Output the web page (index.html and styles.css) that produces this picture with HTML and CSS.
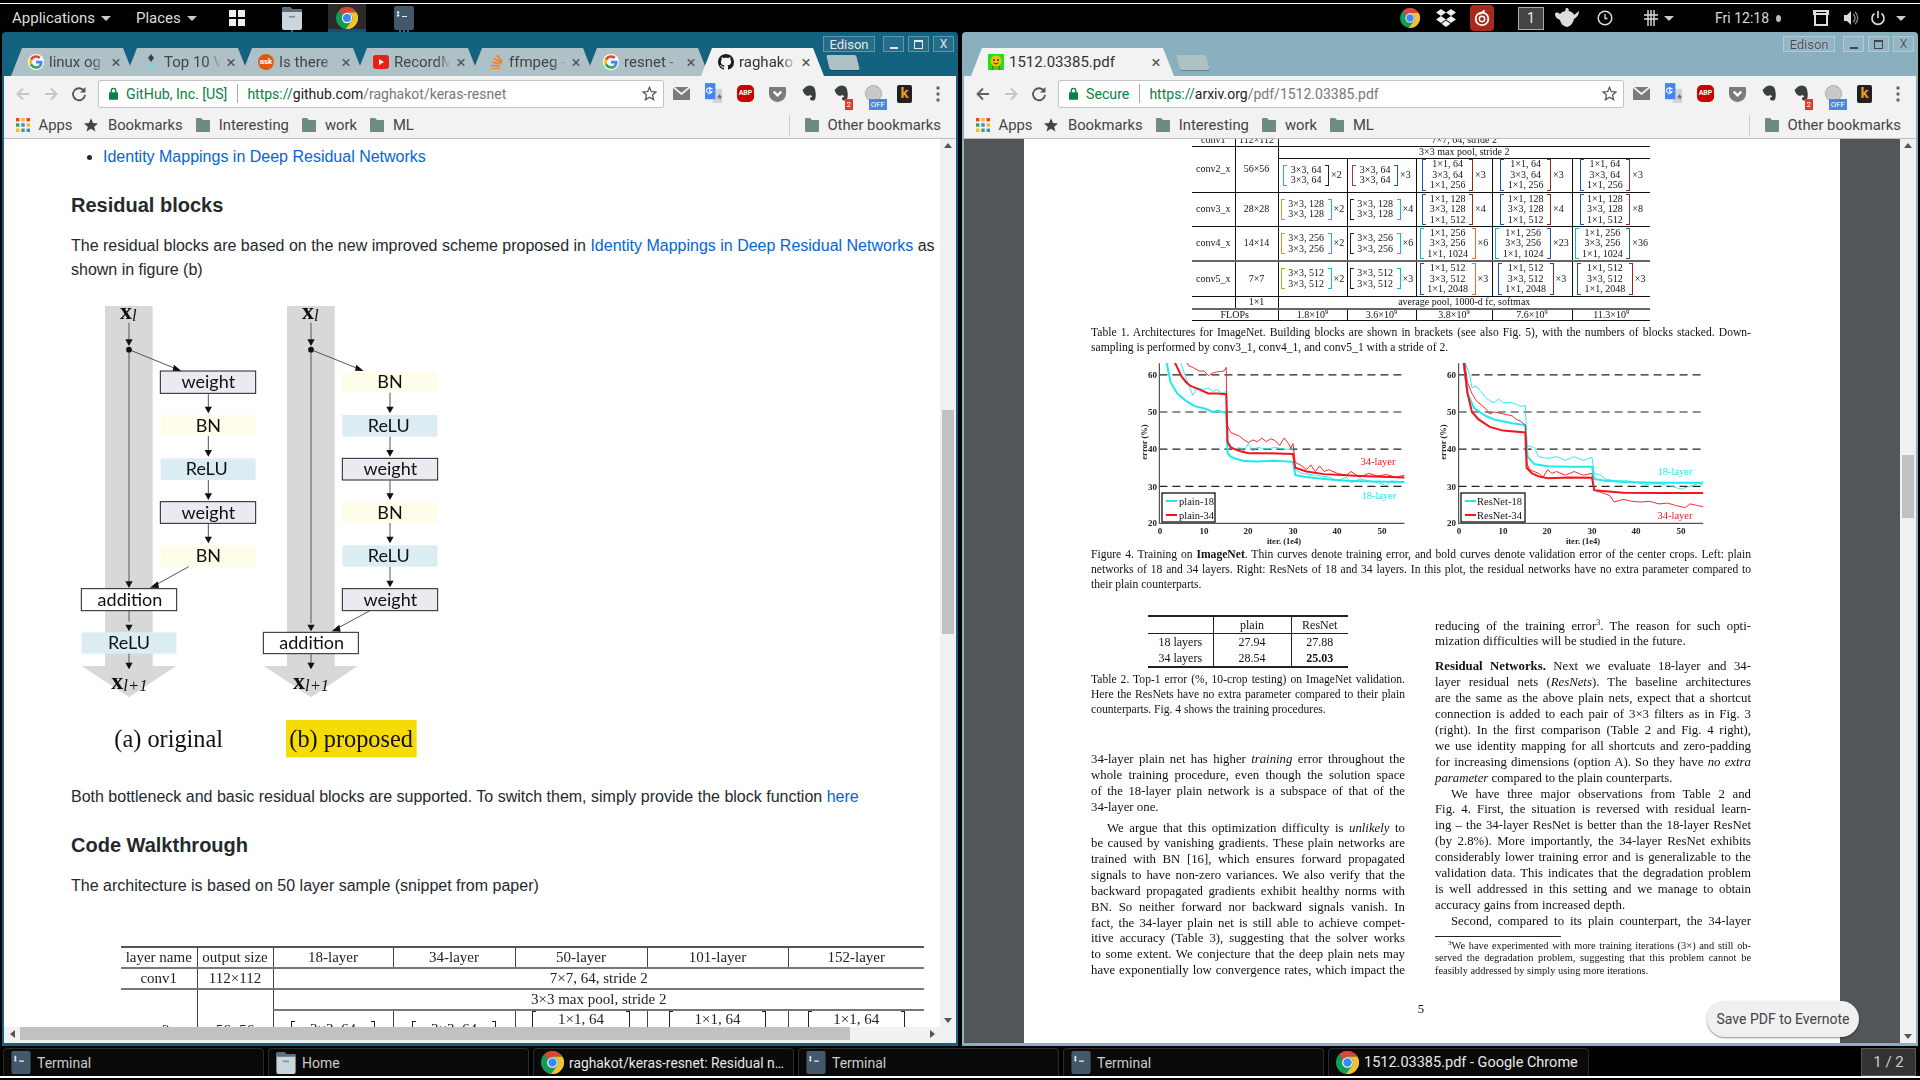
FILE: index.html
```html
<!DOCTYPE html>
<html lang="en">

<head>
    <meta charset="UTF-8">
    <title>Desktop - keras-resnet and arXiv 1512.03385</title>
    <link rel="stylesheet" href="styles.css">
</head>

<body>
    <svg class="defs" width="0" height="0">
        <defs>
            <symbol id="i-chrome" viewBox="0 0 24 24">
                <circle cx="12" cy="12" r="12" fill="#0f9d58" />
                <path fill="#db4437" d="M3.5 3.5A12 12 0 0 1 22.4 6H12a6 6 0 0 0-5.2 3z" />
                <path fill="#fbc02d" d="M22.4 6A12 12 0 0 1 10.5 23.9L17.2 15A6 6 0 0 0 12 6z" />
                <circle cx="12" cy="12" r="5.6" fill="#fff" />
                <circle cx="12" cy="12" r="4.4" fill="#4285f4" />
            </symbol>
            <symbol id="i-g" viewBox="-4 -4 56 56">
                <circle cx="24" cy="24" r="28" fill="#fff" />
                <path fill="#EA4335" d="M24 9.5c3.54 0 6.71 1.22 9.21 3.6l6.85-6.85C35.9 2.38 30.47 0 24 0 14.62 0 6.51 5.38 2.56 13.22l7.98 6.19C12.43 13.72 17.74 9.5 24 9.5z" />
                <path fill="#4285F4" d="M46.98 24.55c0-1.57-.15-3.09-.38-4.55H24v9.02h12.94c-.58 2.96-2.26 5.48-4.78 7.18l7.73 6c4.51-4.18 7.09-10.36 7.09-17.65z" />
                <path fill="#FBBC05" d="M10.53 28.59c-.48-1.45-.76-2.99-.76-4.59s.27-3.14.76-4.59l-7.98-6.19C.92 16.46 0 20.12 0 24c0 3.88.92 7.54 2.56 10.78l7.97-6.19z" />
                <path fill="#34A853" d="M24 48c6.48 0 11.93-2.13 15.89-5.81l-7.73-6c-2.15 1.45-4.92 2.3-8.16 2.3-6.26 0-11.57-4.22-13.47-9.91l-7.98 6.19C6.51 42.62 14.62 48 24 48z" />
            </symbol>
            <symbol id="i-folder" viewBox="0 0 20 24">
                <path fill="#c9d6dd" d="M0 3a2 2 0 0 1 2-2h6l2 2h8a2 2 0 0 1 2 2v17a2 2 0 0 1-2 2H2a2 2 0 0 1-2-2z" />
                <path fill="#5c6f7b" d="M0 3a2 2 0 0 1 2-2h6l2 2h8a2 2 0 0 1 2 2v1H0z" />
                <rect x="7" y="10" width="6" height="1.6" fill="#7d8c95" />
            </symbol>
            <symbol id="i-term" viewBox="0 0 20 24">
                <rect width="20" height="24" rx="2" fill="#435868" />
                <path d="M4 5v6M3 6.5h2.4M3 9.5h2.4M8 10.5h5" stroke="#eef" stroke-width="1.2" fill="none" />
            </symbol>
            <symbol id="i-bfolder" viewBox="0 0 14 16">
                <path fill="#6d8a84" d="M0 2a1 1 0 0 1 1-1h4l2 2h6a1 1 0 0 1 1 1v10a1 1 0 0 1-1 1H1a1 1 0 0 1-1-1z" />
            </symbol>
            <symbol id="i-star" viewBox="0 0 24 24">
                <path d="M12 2l3 7 7.5.6-5.7 4.9 1.8 7.3L12 17.8 5.4 21.8l1.8-7.3L1.5 9.6 9 9z" />
            </symbol>
            <symbol id="i-apps" viewBox="0 0 14 14">
                <rect width="3.4" height="3.4" fill="#ea4335" />
                <rect x="5.3" width="3.4" height="3.4" fill="#fbbc05" />
                <rect x="10.6" width="3.4" height="3.4" fill="#ea4335" />
                <rect y="5.3" width="3.4" height="3.4" fill="#34a853" />
                <rect x="5.3" y="5.3" width="3.4" height="3.4" fill="#4285f4" />
                <rect x="10.6" y="5.3" width="3.4" height="3.4" fill="#fbbc05" />
                <rect y="10.6" width="3.4" height="3.4" fill="#fbbc05" />
                <rect x="5.3" y="10.6" width="3.4" height="3.4" fill="#34a853" />
                <rect x="10.6" y="10.6" width="3.4" height="3.4" fill="#4285f4" />
            </symbol>
            <symbol id="i-back" viewBox="0 0 16 16">
                <path d="M14 8H3M8 2.5L2.5 8 8 13.5" fill="none" stroke="currentColor" stroke-width="1.9" />
            </symbol>
            <symbol id="i-fwd" viewBox="0 0 16 16">
                <path d="M2 8h11M8 2.5L13.5 8 8 13.5" fill="none" stroke="currentColor" stroke-width="1.9" />
            </symbol>
            <symbol id="i-reload" viewBox="0 0 16 16">
                <path d="M13.2 5.2A6 6 0 1 0 14 8.8" fill="none" stroke="#555" stroke-width="1.8" />
                <path d="M14.5 1v5.5H9z" fill="#555" />
            </symbol>
            <symbol id="i-lock" viewBox="0 0 10 14">
                <rect y="5.5" width="10" height="8.5" rx="1" fill="#0b8043" />
                <path d="M2.5 6V3.8a2.5 2.5 0 0 1 5 0V6" fill="none" stroke="#0b8043" stroke-width="1.5" />
            </symbol>
            <symbol id="i-mail" viewBox="0 0 18 18">
                <rect y="2" width="18" height="14" rx="1" fill="#7b7b7b" />
                <path d="M0 2l9 7.5L18 2" fill="none" stroke="#f2f2f2" stroke-width="2" />
            </symbol>
            <symbol id="i-trans" viewBox="0 0 18 22">
                <path d="M8 6h10v15H8z" fill="#d0d4da" />
                <rect width="11" height="17" fill="#4285f4" />
                <path d="M8 6H5v3h2.4A3 3 0 1 1 7 6" fill="none" stroke="#fff" stroke-width="1.1" />
                <path d="M15.500 11l1 2.500 2 .2-1.600 1.300.6 2.200-2-1.200-2 1.200.6-2.200-1.600-1.300 2-.2z" fill="#777" />
            </symbol>
            <symbol id="i-pocket" viewBox="0 0 18 18">
                <path d="M1 2h16a1 1 0 0 1 1 1v6a9 9 0 0 1-18 0V3a1 1 0 0 1 1-1z" fill="#7b7b7b" />
                <path d="M5 7l4 4 4-4" fill="none" stroke="#fff" stroke-width="2.4" />
            </symbol>
            <symbol id="i-ele" viewBox="0 0 18 20">
                <path d="M3 4c1-2 3-3 5-3 1-1 6 0 7 3 1 2 2 8 1 11 0 3-3 4-5 3-2-1-2-4 1-4 0-2-1-2-3-2-1 1-3 1-4 0C3 11 1 8 1 6c0-1 1-2 2-2z" fill="#3a3f42" />
            </symbol>
            <symbol id="i-menu" viewBox="0 0 4 18">
                <circle cx="2" cy="3" r="1.7" fill="#666" />
                <circle cx="2" cy="9" r="1.7" fill="#666" />
                <circle cx="2" cy="15" r="1.7" fill="#666" />
            </symbol>
            <symbol id="i-github" viewBox="0 0 16 16">
                <path fill="#1b1f23" d="M8 0C3.58 0 0 3.58 0 8c0 3.54 2.29 6.53 5.47 7.59.4.07.55-.17.55-.38 0-.19-.01-.82-.01-1.49-2.01.37-2.53-.49-2.69-.94-.09-.23-.48-.94-.82-1.13-.28-.15-.68-.52-.01-.53.63-.01 1.08.58 1.23.82.72 1.21 1.87.87 2.33.66.07-.52.28-.87.51-1.07-1.78-.2-3.64-.89-3.64-3.95 0-.87.31-1.59.82-2.15-.08-.2-.36-1.02.08-2.12 0 0 .67-.21 2.2.82.64-.18 1.32-.27 2-.27.68 0 1.36.09 2 .27 1.53-1.04 2.2-.82 2.2-.82.44 1.1.16 1.92.08 2.12.51.56.82 1.27.82 2.15 0 3.07-1.87 3.75-3.65 3.95.29.25.54.73.54 1.48 0 1.07-.01 1.93-.01 2.2 0 .21.15.46.55.38A8.013 8.013 0 0016 8c0-4.42-3.58-8-8-8z" />
            </symbol>
        </defs>
    </svg>

    <!-- top panel -->
    <div class="panel">
        <div class="menu menu-apps">Applications<i class="caret"></i></div>
        <div class="menu menu-places">Places<i class="caret"></i></div>
        <svg class="p-grid" viewBox="0 0 16 16">
            <rect width="7" height="7" fill="#eee" />
            <rect x="9" width="7" height="7" fill="#eee" />
            <rect y="9" width="7" height="7" fill="#eee" />
            <rect x="9" y="9" width="7" height="7" fill="#eee" />
        </svg>
        <div class="launcher l-folder"><svg class="l-ico"><use href="#i-folder" /></svg><i class="run"></i></div>
        <div class="launcher l-chrome active"><svg class="l-ico"><use href="#i-chrome" /></svg></div>
        <div class="launcher l-term"><svg class="l-ico"><use href="#i-term" /></svg><i class="run run3"></i></div>

        <div class="tray">
            <svg class="t-i t-chrome"><use href="#i-chrome" /></svg>
            <svg class="t-i t-drop" viewBox="0 0 20 20">
                <path fill="#eee" d="M5 1l5 3.5L5 8 0 4.5zM15 1l5 3.5L15 8l-5-3.5zM5 8l5 3.5L5 15l-5-3.5zM15 8l5 3.5-5 3.5-5-3.5zM10 12.5l4.5 3.2L10 19l-4.5-3.3z" />
            </svg>
            <div class="t-red">
                <svg viewBox="0 0 20 20" width="18" height="18">
                    <circle cx="10" cy="11" r="7" fill="none" stroke="#fff" stroke-width="2" />
                    <circle cx="10" cy="11" r="3" fill="none" stroke="#fff" stroke-width="1.6" />
                    <path d="M13 1.5L7 6" stroke="#fff" stroke-width="2" />
                </svg>
            </div>
            <div class="t-num">1</div>
            <svg class="t-i t-pot" viewBox="0 0 24 20">
                <path fill="#ddd" d="M12 0a2 2 0 0 1 1.5 3c3 .5 5 2 5.5 4L24 3c0 4-2 6-5 8-1 4-3 7-7 8-4-1-6-3-7-7C2 11 0 9 0 6c0-2 3-2 5 0 1-1.500 3-2.700 5.500-3A2 2 0 0 1 12 0z" />
            </svg>
            <svg class="t-i t-clock" viewBox="0 0 16 16">
                <circle cx="8" cy="8" r="6.8" fill="none" stroke="#ddd" stroke-width="1.5" />
                <path d="M8 4v4.500h2.500" fill="none" stroke="#ddd" stroke-width="1.3" />
            </svg>
            <svg class="t-i t-hash" viewBox="0 0 16 16">
                <path d="M5 0v16M8 0v16M11 0v16M1 5h14M1 9h14" stroke="#ddd" stroke-width="1.4" />
            </svg>
            <i class="caret t-caret1"></i>
            <div class="t-time">Fri 12:18</div>
            <i class="t-dot"></i>
            <svg class="t-i t-win" viewBox="0 0 16 16">
                <path d="M2 1h12v14H2zM1 1h14v3H1z" fill="none" stroke="#ddd" stroke-width="2" />
            </svg>
            <svg class="t-i t-vol" viewBox="0 0 16 16">
                <path fill="#ddd" d="M1 5h3l4-4v14l-4-4H1z" />
                <path d="M10 4a5 5 0 0 1 0 8M12 2a8 8 0 0 1 0 12" fill="none" stroke="#888" stroke-width="1.4" />
            </svg>
            <svg class="t-i t-pow" viewBox="0 0 16 16">
                <path d="M4.500 3.500a6 6 0 1 0 7 0" fill="none" stroke="#ddd" stroke-width="1.6" />
                <path d="M8 1v7" stroke="#ddd" stroke-width="1.6" />
            </svg>
            <i class="caret t-caret2"></i>
        </div>
    </div>

    <div class="desktop">
        <!-- left window: github readme -->
        <div class="win win-focus">
            <div class="titlebar">
                <div class="tabs">
                    <div class="tab"><svg class="fav"><use href="#i-g" /></svg><span class="tab-t">linux og</span><span class="tab-x">×</span></div>
                    <div class="tab">
                        <svg class="fav" viewBox="0 0 16 16">
                            <path d="M8 0l3 4-3 4-3-4z" fill="#35414a" />
                            <path d="M8 8l3 4-3 4-3-4z" fill="#7fd6d9" />
                        </svg>
                        <span class="tab-t">Top 10 V</span><span class="tab-x">×</span>
                    </div>
                    <div class="tab"><span class="fav fav-ask">ask</span><span class="tab-t">Is there</span><span class="tab-x">×</span></div>
                    <div class="tab">
                        <svg class="fav" viewBox="0 0 16 16">
                            <rect y="1" width="16" height="14" rx="3" fill="#e62117" />
                            <path d="M6 5l5 3-5 3z" fill="#fff" />
                        </svg>
                        <span class="tab-t">RecordM</span><span class="tab-x">×</span>
                    </div>
                    <div class="tab">
                        <svg class="fav" viewBox="0 0 16 16">
                            <path d="M3 15h9M3 11.500l9 .8M4 8l8.500 2M6 4.500l8 4.500M9 1l5 7" fill="none" stroke="#f48024" stroke-width="1.6" />
                            <path d="M1.500 10v5.500h12V10" fill="none" stroke="#bcbbbb" stroke-width="1" />
                        </svg>
                        <span class="tab-t">ffmpeg -</span><span class="tab-x">×</span>
                    </div>
                    <div class="tab"><svg class="fav"><use href="#i-g" /></svg><span class="tab-t">resnet -</span><span class="tab-x">×</span></div>
                    <div class="tab tab-on"><svg class="fav"><use href="#i-github" /></svg><span class="tab-t">raghako</span><span class="tab-x">×</span></div>
                    <i class="tab-new"></i>
                </div>
                <div class="ctls">
                    <span class="ctl ctl-name">Edison</span>
                    <span class="ctl"><i class="g-min"></i></span>
                    <span class="ctl"><i class="g-max"></i></span>
                    <span class="ctl g-x">X</span>
                </div>
            </div>
            <div class="toolbar">
                <svg class="nav nav-off"><use href="#i-back" /></svg>
                <svg class="nav nav-off"><use href="#i-fwd" /></svg>
                <svg class="nav"><use href="#i-reload" /></svg>
                <div class="omni">
                    <svg class="lock"><use href="#i-lock" /></svg>
                    <span class="sec">GitHub, Inc. [US]</span>
                    <i class="omni-div"></i>
                    <span class="url"><span class="u-gr">https://</span><span class="u-dk">github.com</span>/raghakot/keras-resnet</span>
                    <svg class="o-star"><use href="#i-star" /></svg>
                </div>
                <div class="exts">
                    <svg class="ext"><use href="#i-mail" /></svg>
                    <svg class="ext e-tr"><use href="#i-trans" /></svg>
                    <span class="e-abp">ABP</span>
                    <svg class="ext"><use href="#i-pocket" /></svg>
                    <svg class="ext"><use href="#i-ele" /></svg>
                    <span class="e-wrap"><svg class="ext"><use href="#i-ele" /></svg><b class="bdg bdg-r">2</b></span>
                    <span class="e-wrap"><i class="e-disc"></i><b class="bdg bdg-b">OFF</b></span>
                    <span class="e-k">k</span>
                    <svg class="e-menu"><use href="#i-menu" /></svg>
                </div>
            </div>
            <div class="bookmarks">
                <svg class="b-apps"><use href="#i-apps" /></svg><span class="b-t">Apps</span>
                <svg class="b-star"><use href="#i-star" /></svg><span class="b-t">Bookmarks</span>
                <svg class="b-fold"><use href="#i-bfolder" /></svg><span class="b-t">Interesting</span>
                <svg class="b-fold"><use href="#i-bfolder" /></svg><span class="b-t">work</span>
                <svg class="b-fold"><use href="#i-bfolder" /></svg><span class="b-t">ML</span>
                <div class="b-other"><svg class="b-fold"><use href="#i-bfolder" /></svg><span class="b-t">Other bookmarks</span></div>
            </div>
            <div class="view">
                <div class="view-row">
                    <div class="article">
                        <ul class="a-list">
                            <li><a href="#">Identity Mappings in Deep Residual Networks</a></li>
                        </ul>
                        <h2>Residual blocks</h2>
                        <p>The residual blocks are based on the new improved scheme proposed in <a href="#">Identity Mappings in Deep Residual Networks</a> as shown in figure (b)</p>

                        <svg class="blocks" viewBox="0 0 1260 1470">
                            <path class="lane" d="M135 48H278V1128H348L207 1222 65 1128H135Z" />
                            <path class="lane" d="M681 48H824V1128H893L753 1222 612 1128H681Z" />

                            <rect class="bx-w" x="301" y="243" width="286" height="67" />
                            <rect class="bx-b" x="302" y="375" width="285" height="63" />
                            <rect class="bx-r" x="302" y="505" width="285" height="65" />
                            <rect class="bx-w" x="301" y="635" width="286" height="65" />
                            <rect class="bx-b" x="302" y="767" width="285" height="63" />
                            <rect class="bx-a" x="64" y="896" width="286" height="66" />
                            <rect class="bx-r" x="65" y="1027" width="284" height="64" />

                            <rect class="bx-b" x="847" y="245" width="285" height="63" />
                            <rect class="bx-r" x="847" y="375" width="285" height="65" />
                            <rect class="bx-w" x="847" y="505" width="286" height="65" />
                            <rect class="bx-b" x="847" y="636" width="285" height="63" />
                            <rect class="bx-r" x="847" y="766" width="285" height="64" />
                            <rect class="bx-w" x="847" y="896" width="286" height="66" />
                            <rect class="bx-a" x="610" y="1027" width="285" height="64" />

                            <path class="wire" d="M207 98V150M207 179V878M207 962V995M207 1091V1120M207 179L345 235M445 310V352M445 438V482M445 570V612M445 700V742M386 830L285 886" />
                            <path class="wire" d="M753 98V150M753 179V1000M753 1091V1120M753 179L892 235M990 308V352M990 440V482M990 570V612M990 699V742M990 830V872M930 962L830 1016" />
                            <circle class="node" cx="207" cy="179" r="8.500" />
                            <circle class="node" cx="753" cy="179" r="8.500" />
                            <path class="head" d="M196 148h22l-11 20zM196 874h22l-11 20zM196 1004h22l-11 20zM196 1118h22l-11 20zM434 350h22l-11 20zM434 480h22l-11 20zM434 610h22l-11 20zM434 740h22l-11 20zM342 224l22 19-26-1zM293 874l-23 19 27 1z" />
                            <path class="head" d="M742 148h22l-11 20zM742 1004h22l-11 20zM742 1118h22l-11 20zM979 350h22l-11 20zM979 480h22l-11 20zM979 610h22l-11 20zM979 740h22l-11 20zM979 872h22l-11 20zM889 224l22 19-26-1zM838 1004l-23 20 27 1z" />

                            <text class="lb" x="445" y="295">weight</text>
                            <text class="lb" x="445" y="425">BN</text>
                            <text class="lb" x="440" y="555">ReLU</text>
                            <text class="lb" x="445" y="687">weight</text>
                            <text class="lb" x="445" y="816">BN</text>
                            <text class="lb" x="210" y="947">addition</text>
                            <text class="lb" x="207" y="1077">ReLU</text>
                            <text class="lb" x="990" y="295">BN</text>
                            <text class="lb" x="986" y="425">ReLU</text>
                            <text class="lb" x="991" y="556">weight</text>
                            <text class="lb" x="990" y="686">BN</text>
                            <text class="lb" x="986" y="816">ReLU</text>
                            <text class="lb" x="991" y="947">weight</text>
                            <text class="lb" x="755" y="1077">addition</text>

                            <text class="xl" x="180" y="86">x<tspan class="xs" dy="8">l</tspan></text>
                            <text class="xl" x="726" y="86">x<tspan class="xs" dy="8">l</tspan></text>
                            <text class="xl" x="154" y="1198">x<tspan class="xs" dy="6">l+1</tspan></text>
                            <text class="xl" x="699" y="1198">x<tspan class="xs" dy="6">l+1</tspan></text>

                            <rect x="678" y="1290" width="392" height="112" fill="#f6dc06" />
                            <text class="fig-cap" x="163" y="1372">(a) original</text>
                            <text class="fig-cap" x="688" y="1372">(b) proposed</text>
                        </svg>

                        <p class="p-both">Both bottleneck and basic residual blocks are supported. To switch them, simply provide the block function <a href="#">here</a></p>
                        <h2 class="h-code">Code Walkthrough</h2>
                        <p class="p-arch">The architecture is based on 50 layer sample (snippet from paper)</p>

                        <table class="arch">
                            <colgroup>
                                <col class="c76">
                                <col class="c76">
                                <col class="c120">
                                <col class="c122">
                                <col class="c132">
                                <col class="c141">
                                <col class="c136">
                            </colgroup>
                            <tr class="r-top">
                                <td>layer name</td>
                                <td>output size</td>
                                <td>18-layer</td>
                                <td>34-layer</td>
                                <td>50-layer</td>
                                <td>101-layer</td>
                                <td>152-layer</td>
                            </tr>
                            <tr>
                                <td>conv1</td>
                                <td>112×112</td>
                                <td colspan="5">7×7, 64, stride 2</td>
                            </tr>
                            <tr>
                                <td rowspan="2">conv2_x</td>
                                <td rowspan="2">56×56</td>
                                <td colspan="5">3×3 max pool, stride 2</td>
                            </tr>
                            <tr class="r-blocks">
                                <td><span class="blk"><span>3×3, 64</span><span>3×3, 64</span></span></td>
                                <td><span class="blk"><span>3×3, 64</span><span>3×3, 64</span></span></td>
                                <td><span class="blk"><span>1×1, 64</span><span>3×3, 64</span><span>1×1, 256</span></span></td>
                                <td><span class="blk"><span>1×1, 64</span><span>3×3, 64</span><span>1×1, 256</span></span></td>
                                <td><span class="blk"><span>1×1, 64</span><span>3×3, 64</span><span>1×1, 256</span></span></td>
                            </tr>
                        </table>
                    </div>
                    <div class="vbar vbar-gh">
                        <i class="up"></i>
                        <i class="thumb"></i>
                        <i class="dn"></i>
                    </div>
                </div>
                <div class="hbar">
                    <i class="lf"></i>
                    <i class="hthumb"></i>
                    <i class="rt"></i>
                </div>
            </div>
        </div>

        <!-- right window: pdf -->
        <div class="win win-blur">
            <div class="titlebar">
                <div class="tabs">
                    <div class="tab tab-on tab-wide">
                        <svg class="fav" viewBox="0 0 16 16">
                            <rect width="16" height="16" fill="#19e619" />
                            <circle cx="8" cy="7" r="5.500" fill="#f2c100" />
                            <path d="M5 12l-1 4M11 12l1 4" stroke="#a05a00" stroke-width="1.500" />
                            <circle cx="6" cy="6" r="1" fill="#333" />
                            <circle cx="10" cy="6" r="1" fill="#333" />
                            <path d="M5.500 9q2.500 2 5 0" stroke="#333" fill="none" />
                        </svg>
                        <span class="tab-t tab-full">1512.03385.pdf</span><span class="tab-x">×</span>
                    </div>
                    <i class="tab-new"></i>
                </div>
                <div class="ctls">
                    <span class="ctl ctl-name">Edison</span>
                    <span class="ctl"><i class="g-min"></i></span>
                    <span class="ctl"><i class="g-max"></i></span>
                    <span class="ctl g-x">X</span>
                </div>
            </div>
            <div class="toolbar">
                <svg class="nav nav-on"><use href="#i-back" /></svg>
                <svg class="nav nav-off"><use href="#i-fwd" /></svg>
                <svg class="nav"><use href="#i-reload" /></svg>
                <div class="omni">
                    <svg class="lock"><use href="#i-lock" /></svg>
                    <span class="sec">Secure</span>
                    <i class="omni-div"></i>
                    <span class="url"><span class="u-gr">https://</span><span class="u-dk">arxiv.org</span>/pdf/1512.03385.pdf</span>
                    <svg class="o-star"><use href="#i-star" /></svg>
                </div>
                <div class="exts">
                    <svg class="ext"><use href="#i-mail" /></svg>
                    <svg class="ext e-tr"><use href="#i-trans" /></svg>
                    <span class="e-abp">ABP</span>
                    <svg class="ext"><use href="#i-pocket" /></svg>
                    <svg class="ext"><use href="#i-ele" /></svg>
                    <span class="e-wrap"><svg class="ext"><use href="#i-ele" /></svg><b class="bdg bdg-r">2</b></span>
                    <span class="e-wrap"><i class="e-disc"></i><b class="bdg bdg-b">OFF</b></span>
                    <span class="e-k">k</span>
                    <svg class="e-menu"><use href="#i-menu" /></svg>
                </div>
            </div>
            <div class="bookmarks">
                <svg class="b-apps"><use href="#i-apps" /></svg><span class="b-t">Apps</span>
                <svg class="b-star"><use href="#i-star" /></svg><span class="b-t">Bookmarks</span>
                <svg class="b-fold"><use href="#i-bfolder" /></svg><span class="b-t">Interesting</span>
                <svg class="b-fold"><use href="#i-bfolder" /></svg><span class="b-t">work</span>
                <svg class="b-fold"><use href="#i-bfolder" /></svg><span class="b-t">ML</span>
                <div class="b-other"><svg class="b-fold"><use href="#i-bfolder" /></svg><span class="b-t">Other bookmarks</span></div>
            </div>
            <div class="view view-pdf">
                <div class="pdf-page">
                    <table class="t1">
                        <colgroup>
                            <col class="w43">
                            <col class="w43">
                            <col class="w69">
                            <col class="w69">
                            <col class="w76">
                            <col class="w80">
                            <col class="w78">
                        </colgroup>
                        <tr class="h13">
                            <td>conv1</td>
                            <td>112×112</td>
                            <td colspan="5">7×7, 64, stride 2</td>
                        </tr>
                        <tr class="h11">
                            <td rowspan="2">conv2_x</td>
                            <td rowspan="2">56×56</td>
                            <td colspan="5">3×3 max pool, stride 2</td>
                        </tr>
                        <tr class="h34">
                            <td><div class="cell"><span class="blk l-cy r-bk"><span>3×3, 64</span><span>3×3, 64</span></span>×2</div></td>
                            <td><div class="cell"><span class="blk l-re r-bl"><span>3×3, 64</span><span>3×3, 64</span></span>×3</div></td>
                            <td><div class="cell"><span class="blk l-bl r-re"><span>1×1, 64</span><span>3×3, 64</span><span>1×1, 256</span></span>×3</div></td>
                            <td><div class="cell"><span class="blk l-bl r-re"><span>1×1, 64</span><span>3×3, 64</span><span>1×1, 256</span></span>×3</div></td>
                            <td><div class="cell"><span class="blk l-bl r-re"><span>1×1, 64</span><span>3×3, 64</span><span>1×1, 256</span></span>×3</div></td>
                        </tr>
                        <tr class="h35">
                            <td>conv3_x</td>
                            <td>28×28</td>
                            <td><div class="cell"><span class="blk l-or r-cy"><span>3×3, 128</span><span>3×3, 128</span></span>×2</div></td>
                            <td><div class="cell"><span class="blk l-bk r-cy"><span>3×3, 128</span><span>3×3, 128</span></span>×4</div></td>
                            <td><div class="cell"><span class="blk l-bl r-re"><span>1×1, 128</span><span>3×3, 128</span><span>1×1, 512</span></span>×4</div></td>
                            <td><div class="cell"><span class="blk l-bl r-re"><span>1×1, 128</span><span>3×3, 128</span><span>1×1, 512</span></span>×4</div></td>
                            <td><div class="cell"><span class="blk l-bl r-re"><span>1×1, 128</span><span>3×3, 128</span><span>1×1, 512</span></span>×8</div></td>
                        </tr>
                        <tr class="h34 r-soft">
                            <td>conv4_x</td>
                            <td>14×14</td>
                            <td><div class="cell"><span class="blk l-or r-cy"><span>3×3, 256</span><span>3×3, 256</span></span>×2</div></td>
                            <td><div class="cell"><span class="blk l-bk r-cy"><span>3×3, 256</span><span>3×3, 256</span></span>×6</div></td>
                            <td><div class="cell"><span class="blk l-cy r-or"><span>1×1, 256</span><span>3×3, 256</span><span>1×1, 1024</span></span>×6</div></td>
                            <td><div class="cell"><span class="blk l-cy r-bl"><span>1×1, 256</span><span>3×3, 256</span><span>1×1, 1024</span></span>×23</div></td>
                            <td><div class="cell"><span class="blk l-cy r-bl"><span>1×1, 256</span><span>3×3, 256</span><span>1×1, 1024</span></span>×36</div></td>
                        </tr>
                        <tr class="h35">
                            <td>conv5_x</td>
                            <td>7×7</td>
                            <td><div class="cell"><span class="blk l-or r-cy"><span>3×3, 512</span><span>3×3, 512</span></span>×2</div></td>
                            <td><div class="cell"><span class="blk l-bk r-cy"><span>3×3, 512</span><span>3×3, 512</span></span>×3</div></td>
                            <td><div class="cell"><span class="blk l-bl r-or"><span>1×1, 512</span><span>3×3, 512</span><span>1×1, 2048</span></span>×3</div></td>
                            <td><div class="cell"><span class="blk l-bl r-re"><span>1×1, 512</span><span>3×3, 512</span><span>1×1, 2048</span></span>×3</div></td>
                            <td><div class="cell"><span class="blk l-bl r-re"><span>1×1, 512</span><span>3×3, 512</span><span>1×1, 2048</span></span>×3</div></td>
                        </tr>
                        <tr class="h12 r-soft">
                            <td></td>
                            <td>1×1</td>
                            <td colspan="5">average pool, 1000-d fc, softmax</td>
                        </tr>
                        <tr class="h11">
                            <td colspan="2">FLOPs</td>
                            <td>1.8×10<sup>9</sup></td>
                            <td>3.6×10<sup>9</sup></td>
                            <td>3.8×10<sup>9</sup></td>
                            <td>7.6×10<sup>9</sup></td>
                            <td>11.3×10<sup>9</sup></td>
                        </tr>
                    </table>

                    <div class="cap cap-t1">
                        <div class="ln">Table 1. Architectures for ImageNet. Building blocks are shown in brackets (see also Fig. 5), with the numbers of blocks stacked. Down-</div>
                        <div class="ln end">sampling is performed by conv3_1, conv4_1, and conv5_1 with a stride of 2.</div>
                    </div>

                    <svg class="plots" viewBox="0 0 680 192">
                        <defs>
                            <clipPath id="clip-a"><rect x="79" y="9" width="246" height="161" /></clipPath>
                            <clipPath id="clip-b"><rect x="378" y="9" width="246" height="161" /></clipPath>
                        </defs>
                        <g clip-path="url(#clip-a)">
                            <g transform="translate(79.400 244) scale(4.454 -3.720)">
                                <path class="dash" d="M0 60H55M0 50H55M0 40H55M0 30H55" />
                                <polyline class="thin cy" points="4,66 6,59 7.500,54.500 8.500,56.500 10,56 11,56.500 12,55.500 13,56 14,55 15,55.500 15.300,42 16,41 17,40 18,40.500 19,39.500 20,41.500 21,39.500 22,40.500 24,40 26,40.500 28,40 30,40 30.500,34.500 32,33.500 35,33 38,32.500 40,31.500 42,32.500 43,31 45,32 47,31.500 49,31 51,30.200 52,31.500 55,31" />
                                <polyline class="thick cy" points="1.500,64 2.500,58 4,55 6,53 8,51.500 10,51 12,50 13,50.300 15,49.800 15.300,39 16,38 17,37.500 19,36.800 22,36.700 26,36.900 30,36.600 30.500,33 33,32.500 37,32 42,31.500 48,31.300 55,31.200" />
                                <polyline class="thin re" points="5.500,65 6.500,62.500 7.500,62 9,61 10,61 11,59.800 12,60.500 13,60.800 14.500,61 15,62 15.200,46.500 16,44.500 17,44 18,43.500 19,42.500 20,41.800 21,42.500 22,42 23,43 24,42 25,42.800 26,42.300 27,41 28,43 29,41.500 29.500,40.300 30,41.500 30.500,36.500 32,35.500 33,34.500 34,35.800 35,34 36,35.500 37,34 38,34.500 40,33.500 42,33 43,34 45,32.500 47,33.500 49,32.800 51,33.200 53,32.500 55,33" />
                                <polyline class="thick re" points="2.800,65 4,62 5,59.500 6,58 7,57 9,56 11,55 13,55 15,54.800 15.300,42 16,40.500 18,39.500 20,38.900 24,38.900 30,38.700 30.500,35 33,34 37,33.300 45,32.800 55,32.400" />
                            </g>
                        </g>
                        <g clip-path="url(#clip-b)">
                            <g transform="translate(378.600 244) scale(4.447 -3.720)">
                                <path class="dash" d="M0 60H55M0 50H55M0 40H55M0 30H55" />
                                <polyline class="thin cy" points="1.200,64 2.500,60 3,56.500 4,57 5,55.500 6,54 7,53 8,52.500 9,53.500 10,52.500 12,52.500 13,52 14,51.500 15,51.800 15.400,41 17,40.500 18,38 20,37.500 22,38 24,37 26,38 28,37 30,37.800 30.500,33.500 32,33 33,32 35,31.500 38,31.500 40,31 42,30.500 45,30.800 48,30 50,29.300 52,30 54,30.800 55,30.200" />
                                <polyline class="thick cy" points="1,64 2,55 3.500,51 6,49 8,48 12,47 15,46.500 15.500,38 17,36 20,35.400 25,35.300 30,35.300 30.500,32 33,31.500 37,31.200 45,31 55,31" />
                                <polyline class="thin re" points="1.300,64 2,58 3,55 4,53 6,51 7,49.500 8,50 10,49.500 12,49 13,48 14,47.500 15,46.500 15.400,36 16,34.500 18,33.500 19,32.500 20,34.500 21,33.500 22,34 24,33 26,34 28,33 30,33.500 30.400,29 33,28 34,27.500 35,25.800 37,26.500 39,26 41,25.800 43,26 45,25.300 47,25.500 49,24.800 51,24.300 52,25.300 54,24.800 55,24.500" />
                                <polyline class="thick re" points="1.100,64 2,55 3,50 4.500,48 7,46 10,45 15,44.500 15.300,35 16.500,33.500 18,32.700 20,32.200 25,32.400 30,32.300 30.500,29 33,28.700 37,28.300 45,28.200 55,28.200" />
                            </g>
                        </g>
                        <path class="axis" d="M79.400 9.300V169.300H324.400M378.600 9.300V169.300H623.200" />
                        <text class="tk ta-e" x="77" y="24">60</text>
                        <text class="tk ta-e" x="77" y="61">50</text>
                        <text class="tk ta-e" x="77" y="98">40</text>
                        <text class="tk ta-e" x="77" y="136">30</text>
                        <text class="tk ta-e" x="77" y="172">20</text>
                        <text class="tk ta-m" x="80" y="180">0</text>
                        <text class="tk ta-m" x="124" y="180">10</text>
                        <text class="tk ta-m" x="168" y="180">20</text>
                        <text class="tk ta-m" x="213" y="180">30</text>
                        <text class="tk ta-m" x="257" y="180">40</text>
                        <text class="tk ta-m" x="302" y="180">50</text>
                        <text class="ax-l ta-m" x="204" y="190">iter. (1e4)</text>
                        <text class="ax-l ta-m" transform="translate(67 88) rotate(-90)">error (%)</text>
                        <text class="cv-re ta-m" x="298" y="111">34-layer</text>
                        <text class="cv-cy ta-m" x="299" y="145">18-layer</text>
                        <rect class="leg" x="82" y="139" width="53" height="29" />
                        <path class="thick cy" d="M86 147H97" />
                        <path class="thick re" d="M86 161H97" />
                        <text class="lg" x="99" y="151">plain-18</text>
                        <text class="lg" x="99" y="165">plain-34</text>

                        <text class="tk ta-e" x="376" y="24">60</text>
                        <text class="tk ta-e" x="376" y="61">50</text>
                        <text class="tk ta-e" x="376" y="98">40</text>
                        <text class="tk ta-e" x="376" y="136">30</text>
                        <text class="tk ta-e" x="376" y="172">20</text>
                        <text class="tk ta-m" x="379" y="180">0</text>
                        <text class="tk ta-m" x="423" y="180">10</text>
                        <text class="tk ta-m" x="467" y="180">20</text>
                        <text class="tk ta-m" x="512" y="180">30</text>
                        <text class="tk ta-m" x="556" y="180">40</text>
                        <text class="tk ta-m" x="601" y="180">50</text>
                        <text class="ax-l ta-m" x="503" y="190">iter. (1e4)</text>
                        <text class="ax-l ta-m" transform="translate(366 88) rotate(-90)">error (%)</text>
                        <text class="cv-cy ta-m" x="595" y="121">18-layer</text>
                        <text class="cv-re ta-m" x="595" y="165">34-layer</text>
                        <rect class="leg" x="381" y="139" width="64" height="29" />
                        <path class="thick cy" d="M385 147H396" />
                        <path class="thick re" d="M385 161H396" />
                        <text class="lg" x="397" y="151">ResNet-18</text>
                        <text class="lg" x="397" y="165">ResNet-34</text>
                    </svg>

                    <div class="cap cap-f4">
                        <div class="ln">Figure 4. Training on <b>ImageNet</b>. Thin curves denote training error, and bold curves denote validation error of the center crops. Left: plain</div>
                        <div class="ln">networks of 18 and 34 layers. Right: ResNets of 18 and 34 layers. In this plot, the residual networks have no extra parameter compared to</div>
                        <div class="ln end">their plain counterparts.</div>
                    </div>

                    <div class="cols">
                        <div class="col col-l">
                            <table class="t2">
                                <colgroup>
                                    <col class="w65">
                                    <col class="w78">
                                    <col class="w57">
                                </colgroup>
                                <tr class="t2-head">
                                    <td></td>
                                    <td>plain</td>
                                    <td>ResNet</td>
                                </tr>
                                <tr>
                                    <td>18 layers</td>
                                    <td>27.94</td>
                                    <td>27.88</td>
                                </tr>
                                <tr>
                                    <td>34 layers</td>
                                    <td>28.54</td>
                                    <td><b>25.03</b></td>
                                </tr>
                            </table>
                            <div class="cap cap-t2">
                                <div class="ln">Table 2. Top-1 error (%, 10-crop testing) on ImageNet validation.</div>
                                <div class="ln">Here the ResNets have no extra parameter compared to their plain</div>
                                <div class="ln end">counterparts. Fig. 4 shows the training procedures.</div>
                            </div>
                            <div class="para para-a">
                                <div class="ln">34-layer plain net has higher <i>training</i> error throughout the</div>
                                <div class="ln">whole training procedure, even though the solution space</div>
                                <div class="ln">of the 18-layer plain network is a subspace of that of the</div>
                                <div class="ln end">34-layer one.</div>
                            </div>
                            <div class="para para-b">
                                <div class="ln ind">We argue that this optimization difficulty is <i>unlikely</i> to</div>
                                <div class="ln">be caused by vanishing gradients. These plain networks are</div>
                                <div class="ln">trained with BN [16], which ensures forward propagated</div>
                                <div class="ln">signals to have non-zero variances. We also verify that the</div>
                                <div class="ln">backward propagated gradients exhibit healthy norms with</div>
                                <div class="ln">BN. So neither forward nor backward signals vanish. In</div>
                                <div class="ln">fact, the 34-layer plain net is still able to achieve compet-</div>
                                <div class="ln">itive accuracy (Table 3), suggesting that the solver works</div>
                                <div class="ln">to some extent. We conjecture that the deep plain nets may</div>
                                <div class="ln">have exponentially low convergence rates, which impact the</div>
                            </div>
                        </div>
                        <div class="col col-r">
                            <div class="para">
                                <div class="ln">reducing of the training error<sup>3</sup>. The reason for such opti-</div>
                                <div class="ln end">mization difficulties will be studied in the future.</div>
                            </div>
                            <div class="para para-res">
                                <div class="ln"><b>Residual Networks.</b> Next we evaluate 18-layer and 34-</div>
                                <div class="ln">layer residual nets (<i>ResNets</i>). The baseline architectures</div>
                                <div class="ln">are the same as the above plain nets, expect that a shortcut</div>
                                <div class="ln">connection is added to each pair of 3×3 filters as in Fig. 3</div>
                                <div class="ln">(right). In the first comparison (Table 2 and Fig. 4 right),</div>
                                <div class="ln">we use identity mapping for all shortcuts and zero-padding</div>
                                <div class="ln">for increasing dimensions (option A). So they have <i>no extra</i></div>
                                <div class="ln end"><i>parameter</i> compared to the plain counterparts.</div>
                                <div class="ln ind">We have three major observations from Table 2 and</div>
                                <div class="ln">Fig. 4. First, the situation is reversed with residual learn-</div>
                                <div class="ln">ing – the 34-layer ResNet is better than the 18-layer ResNet</div>
                                <div class="ln">(by 2.8%). More importantly, the 34-layer ResNet exhibits</div>
                                <div class="ln">considerably lower training error and is generalizable to the</div>
                                <div class="ln">validation data. This indicates that the degradation problem</div>
                                <div class="ln">is well addressed in this setting and we manage to obtain</div>
                                <div class="ln end">accuracy gains from increased depth.</div>
                                <div class="ln ind">Second, compared to its plain counterpart, the 34-layer</div>
                            </div>
                            <div class="foot">
                                <div class="ln ind2"><sup>3</sup>We have experimented with more training iterations (3×) and still ob-</div>
                                <div class="ln">served the degradation problem, suggesting that this problem cannot be</div>
                                <div class="ln end">feasibly addressed by simply using more iterations.</div>
                            </div>
                        </div>
                    </div>
                    <div class="pno">5</div>
                </div>
                <div class="vbar vbar-pdf">
                    <i class="up"></i>
                    <i class="thumb"></i>
                    <i class="dn"></i>
                </div>
                <div class="save-pdf">Save PDF to Evernote</div>
            </div>
        </div>
    </div>

    <!-- bottom task bar -->
    <div class="taskbar">
        <div class="task"><svg class="task-i"><use href="#i-term" /></svg>Terminal</div>
        <div class="task"><svg class="task-i"><use href="#i-folder" /></svg>Home</div>
        <div class="task task-on task-tight"><svg class="task-c"><use href="#i-chrome" /></svg>raghakot/keras-resnet: Residual n…</div>
        <div class="task"><svg class="task-i"><use href="#i-term" /></svg>Terminal</div>
        <div class="task"><svg class="task-i"><use href="#i-term" /></svg>Terminal</div>
        <div class="task task-on"><svg class="task-c"><use href="#i-chrome" /></svg>1512.03385.pdf - Google Chrome</div>
        <div class="pager">1 / 2</div>
    </div>
</body>

</html>
```

FILE: styles.css
```css
html, body {
    margin: 0;
    height: 100%;
}
body {
    width: 1920px;
    height: 1080px;
    overflow: hidden;
    background: #000;
    font-family: Roboto, "Open Sans", sans-serif;
    font-size: 14px;
    color: #ddd;
}
.defs {
    position: absolute;
}

/* top panel */
.panel {
    display: flex;
    align-items: center;
    height: 28px;
    margin-top: 3px;
    border-top: 1px solid #fff;
    padding-left: 12px;
}
.menu {
    display: flex;
    align-items: center;
    color: #ddd;
    font-size: 15px;
}
.menu-apps {
    width: 124px;
}
.menu-places {
    width: 93px;
}
.caret {
    display: inline-block;
    width: 0;
    height: 0;
    margin-left: 6px;
    border-left: 5px solid transparent;
    border-right: 5px solid transparent;
    border-top: 5px solid #ccc;
}
.p-grid {
    width: 16px;
    height: 16px;
    margin-right: 36px;
}
.launcher {
    position: relative;
    display: flex;
    align-items: center;
    justify-content: center;
    height: 28px;
}
.l-ico {
    width: 22px;
    height: 24px;
}
.l-folder {
    width: 38px;
    margin-left: -8px;
}
.l-chrome {
    width: 38px;
    margin-left: 17px;
}
.l-term {
    width: 38px;
    margin-left: 19px;
}
.launcher.active {
    background: #2a2a2a;
    box-shadow: inset 0 -3px 0 #14507c;
}
.run {
    position: absolute;
    bottom: 0;
    left: 18px;
    width: 2px;
    height: 2px;
    background: #1a6aa8;
}
.run3 {
    box-shadow: 4px 0 0 #1a6aa8, -4px 0 0 #1a6aa8;
}
.tray {
    display: flex;
    align-items: center;
    margin-left: auto;
    padding-right: 14px;
}
.t-i {
    display: block;
}
.t-chrome {
    width: 20px;
    height: 20px;
}
.t-drop {
    width: 20px;
    height: 20px;
    margin-left: 16px;
}
.t-red {
    display: flex;
    align-items: center;
    justify-content: center;
    width: 24px;
    height: 26px;
    margin-left: 14px;
    border-radius: 4px;
    background: #a8281c;
}
.t-num {
    width: 24px;
    height: 21px;
    margin-left: 24px;
    border: 1px solid #aaa;
    background: #444;
    color: #eee;
    line-height: 21px;
    text-align: center;
}
.t-pot {
    width: 24px;
    height: 20px;
    margin-left: 11px;
}
.t-clock {
    width: 16px;
    height: 16px;
    margin-left: 18px;
}
.t-hash {
    width: 16px;
    height: 16px;
    margin-left: 30px;
}
.t-caret1 {
    margin-left: 5px;
}
.t-time {
    width: 58px;
    margin-left: 41px;
    color: #ddd;
    font-size: 14px;
    white-space: nowrap;
}
.t-dot {
    width: 5px;
    height: 7px;
    margin-left: 3px;
    border-radius: 50%;
    background: #bbb;
}
.t-win {
    width: 16px;
    height: 16px;
    margin-left: 32px;
}
.t-vol {
    width: 16px;
    height: 16px;
    margin-left: 14px;
}
.t-pow {
    width: 16px;
    height: 16px;
    margin-left: 11px;
}
.t-caret2 {
    margin-left: 10px;
}

/* windows */
.desktop {
    display: flex;
    justify-content: space-between;
    height: 1014px;
    padding: 0 2px;
}
.win {
    display: flex;
    flex-direction: column;
    width: 956px;
    box-sizing: border-box;
    padding: 0 2px 3px;
    border-radius: 4px 4px 0 0;
}
.win-focus {
    background: #13627f;
}
.win-blur {
    background: #8ab0bf;
}
.titlebar {
    position: relative;
    display: flex;
    height: 44px;
    flex: none;
}
.tabs {
    display: flex;
    align-items: flex-end;
    padding-left: 7px;
}
.tab {
    display: flex;
    align-items: center;
    flex: none;
    box-sizing: border-box;
    width: 123px;
    height: 28px;
    margin-right: -8px;
    padding: 0 11px 0 17px;
    background: #aec1c7;
    clip-path: polygon(11px 0, calc(100% - 11px) 0, 100% 100%, 0 100%);
    color: #444;
    font-size: 15px;
}
.tab-on {
    position: relative;
    z-index: 1;
    background: #f2f2f2;
    color: #333;
}
.tab-wide {
    width: 203px;
}
.fav {
    flex: none;
    width: 16px;
    height: 16px;
    margin-right: 5px;
}
.fav-ask {
    border-radius: 50%;
    background: #e25a11;
    color: #fff;
    font-size: 8px;
    font-weight: 700;
    line-height: 16px;
    text-align: center;
}
.tab-t {
    flex: 1;
    min-width: 0;
    overflow: hidden;
    white-space: nowrap;
    -webkit-mask-image: linear-gradient(90deg, #000 75%, transparent);
    mask-image: linear-gradient(90deg, #000 75%, transparent);
}
.tab-full {
    -webkit-mask-image: none;
    mask-image: none;
}
.tab-x {
    flex: none;
    width: 14px;
    margin-left: 3px;
    color: #555;
    font-size: 17px;
    text-align: center;
}
.tab-new {
    flex: none;
    width: 30px;
    height: 15px;
    margin: 0 0 6px 12px;
    background: #aec1c7;
    transform: skewX(14deg);
    border-radius: 2px;
    box-shadow: 0 1px 0 rgba(0, 0, 0, .25);
}
.ctls {
    position: absolute;
    top: 4px;
    right: 2px;
    z-index: 2;
    display: flex;
    align-items: flex-start;
    gap: 4px;
}
.ctl {
    display: flex;
    align-items: center;
    justify-content: center;
    box-sizing: border-box;
    width: 21px;
    height: 16px;
    border: 1px solid rgba(255, 255, 255, .28);
    background: rgba(255, 255, 255, .08);
    color: #e8e8e8;
    font-size: 13px;
}
.win-blur .ctl {
    color: #445;
    text-shadow: 0 0 1px #fff;
}
.ctl-name {
    width: 52px;
    margin-right: 4px;
    font-size: 13px;
}
.g-min {
    width: 8px;
    height: 2px;
    margin-top: 7px;
    background: currentColor;
}
.g-max {
    width: 7px;
    height: 6px;
    border: 1.5px solid currentColor;
    border-top-width: 2px;
}
.g-x {
    font-size: 12px;
}

/* toolbar */
.toolbar {
    display: flex;
    align-items: center;
    flex: none;
    height: 35px;
    background: #f2f2f2;
}
.nav {
    flex: none;
    width: 16px;
    height: 16px;
    margin-left: 12px;
    color: #5f6368;
}
.nav-off {
    color: #c6c6c6;
}
.nav:first-child {
    margin-left: 11px;
}
.omni {
    display: flex;
    align-items: center;
    flex: none;
    box-sizing: border-box;
    width: 566px;
    height: 28px;
    margin-left: 11px;
    padding-left: 10px;
    border: 1px solid #c4c4c4;
    border-radius: 2px;
    background: #fff;
    white-space: nowrap;
}
.lock {
    flex: none;
    width: 9px;
    height: 13px;
}
.sec {
    margin-left: 8px;
    color: #0b8043;
    font-size: 14.200px;
}
.omni-div {
    flex: none;
    width: 1px;
    height: 19px;
    margin: 0 9px 0 10px;
    background: #aaa;
}
.url {
    color: #777;
    font-size: 14px;
}
.u-gr {
    color: #0b8043;
}
.u-dk {
    color: #222;
}
.o-star {
    flex: none;
    width: 15px;
    height: 15px;
    margin-left: auto;
    margin-right: 6px;
    fill: #fff;
    stroke: #555;
    stroke-width: 2;
}
.exts {
    display: flex;
    align-items: center;
    margin-left: 9px;
}
.ext {
    flex: none;
    width: 17px;
    height: 17px;
    margin-right: 15px;
}
.e-tr {
    height: 21px;
}
.e-abp {
    flex: none;
    width: 17px;
    height: 17px;
    margin-right: 15px;
    border-radius: 5px;
    background: #c00;
    color: #fff;
    font-size: 7px;
    font-weight: 700;
    line-height: 17px;
    text-align: center;
}
.e-wrap {
    position: relative;
    flex: none;
    width: 17px;
    height: 17px;
    margin-right: 15px;
}
.e-disc {
    display: block;
    width: 15px;
    height: 15px;
    border: 1px solid #aaa;
    border-radius: 50%;
    background: #c9c9c9;
}
.bdg {
    position: absolute;
    right: -3px;
    bottom: -8px;
    padding: 1px 2px;
    color: #fff;
    font-size: 8px;
    font-weight: 400;
    line-height: 9px;
}
.bdg-r {
    background: #e33;
}
.bdg-b {
    right: -5px;
    background: #4a86e8;
}
.e-k {
    flex: none;
    width: 15px;
    height: 18px;
    margin-right: 24px;
    border-radius: 2px;
    background: #222;
    color: #f39a1e;
    font-size: 15px;
    font-weight: 700;
    line-height: 17px;
    text-align: center;
}
.e-menu {
    flex: none;
    width: 4px;
    height: 18px;
}

/* bookmarks */
.bookmarks {
    display: flex;
    align-items: center;
    flex: none;
    height: 28px;
    padding-left: 12px;
    background: #f2f2f2;
    border-bottom: 1px solid #bdbdbd;
    box-sizing: border-box;
}
.b-t {
    margin-left: 8.500px;
    color: #444;
    font-size: 14.800px;
    white-space: nowrap;
}
.b-apps {
    flex: none;
    width: 14px;
    height: 14px;
}
.b-star {
    flex: none;
    width: 16px;
    height: 16px;
    margin-left: 11px;
    fill: #444;
}
.b-fold {
    flex: none;
    width: 14px;
    height: 16px;
    margin-left: 13.500px;
}
.b-other {
    display: flex;
    align-items: center;
    margin-left: auto;
    margin-right: 15px;
    height: 20px;
    border-left: 1px solid #ccc;
    padding-left: 1px;
}

/* github page */
.view {
    display: flex;
    flex-direction: column;
    flex: 1;
    min-height: 0;
    background: #fff;
    color: #24292e;
}
.view-row {
    display: flex;
    flex: none;
    height: 888px;
}
.article {
    flex: none;
    box-sizing: border-box;
    width: 936px;
    height: 888px;
    overflow: hidden;
    padding: 6px 0 0 67px;
    font-family: "Liberation Sans", Arial, sans-serif;
    font-size: 16px;
    line-height: 24px;
}
.article a {
    color: #0366d6;
    text-decoration: none;
}
.article p {
    margin: 0;
    width: 866px;
}
.a-list {
    margin: 0;
    padding-left: 32px;
}
.article h2 {
    margin: 24px 0 16px;
    font-size: 20px;
    font-weight: 600;
    line-height: 25px;
}
.blocks {
    display: block;
    width: 420px;
    height: 490px;
    margin: 8px 0 5px -11px;
    filter: blur(.3px);
}
.lane {
    fill: #d8d8d8;
}
.bx-w {
    fill: #ece9f1;
    stroke: #222;
    stroke-width: 3;
}
.bx-a {
    fill: #fff;
    stroke: #222;
    stroke-width: 3;
}
.bx-b {
    fill: #fdfdea;
}
.bx-r {
    fill: #dbedf3;
}
.wire {
    fill: none;
    stroke: #555;
    stroke-width: 3;
}
.node, .head {
    fill: #111;
}
.lb {
    font-family: Lato, "Open Sans", sans-serif;
    font-size: 54px;
    text-anchor: middle;
    fill: #111;
}
.xl {
    font-family: "Liberation Serif", serif;
    font-size: 72px;
    font-weight: 700;
    fill: #111;
}
.xs {
    font-size: 50px;
    font-weight: 400;
    font-style: italic;
}
.fig-cap {
    font-family: "Liberation Serif", serif;
    font-size: 73px;
    fill: #111;
}
.h-code {
    margin-top: 24px !important;
}
.arch {
    table-layout: fixed;
    width: 803px;
    margin: 48px 0 0 50px;
    border-collapse: collapse;
    font-family: "Liberation Serif", serif;
    font-size: 15px;
    line-height: 17px;
    color: #222;
    text-align: center;
    filter: blur(.3px);
}
.arch td {
    height: 19px;
    padding: 0;
    border: 1px solid #444;
    border-top: 2px solid #777;
    border-bottom: 2px solid #777;
}
.arch tr td:first-child {
    border-left: 0;
}
.arch tr td:last-child {
    border-right: 0;
}
.arch .r-top td {
    border-top: 2px solid #555;
}
.r-blocks td {
    height: 60px !important;
    vertical-align: top;
}
.arch .blk {
    padding: 0 22px;
}
.arch .r-blocks td:nth-child(-n+2) .blk {
    margin-top: 10px;
    padding: 0 19px;
}
.c76 { width: 76px; }
.c120 { width: 120px; }
.c122 { width: 122px; }
.c132 { width: 132px; }
.c141 { width: 141px; }
.c136 { width: 136px; }

/* scrollbars */
.vbar {
    display: flex;
    flex-direction: column;
    align-items: center;
    flex: none;
    box-sizing: border-box;
    width: 16px;
    background: #f1f1f1;
    padding: 4px 0;
}
.vbar .up {
    border-left: 4px solid transparent;
    border-right: 4px solid transparent;
    border-bottom: 5px solid #555;
}
.vbar .dn {
    margin-top: auto;
    border-left: 4px solid transparent;
    border-right: 4px solid transparent;
    border-top: 5px solid #555;
}
.vbar .thumb {
    width: 12px;
    background: #c1c1c1;
}
.vbar-gh .thumb {
    height: 224px;
    margin-top: 262px;
}
.vbar-pdf {
    height: 904px;
    margin-left: 60px;
}
.vbar-pdf .thumb {
    height: 63px;
    margin-top: 307px;
}
.hbar {
    display: flex;
    align-items: flex-start;
    flex: 1;
    background: #f1f1f1;
    padding-left: 6px;
}
.hbar .lf {
    margin-top: 3px;
    border-top: 4px solid transparent;
    border-bottom: 4px solid transparent;
    border-right: 5px solid #555;
}
.hthumb {
    width: 830px;
    height: 13px;
    margin-left: 5px;
    background: #c1c1c1;
}
.hbar .rt {
    margin: 3px 0 0 80px;
    border-top: 4px solid transparent;
    border-bottom: 4px solid transparent;
    border-left: 5px solid #555;
}

/* pdf page */
.view-pdf {
    position: relative;
    flex-direction: row;
    background: #525659;
    padding-left: 60px;
}
.pdf-page {
    flex: none;
    box-sizing: border-box;
    width: 816px;
    height: 904px;
    overflow: hidden;
    padding-left: 67px;
    background: #fff;
    color: #111;
    font-family: "Liberation Serif", serif;
    filter: blur(.3px);
}
.t1 {
    table-layout: fixed;
    width: 458px;
    margin: -6px 0 0 101px;
    border-collapse: collapse;
    font-size: 10px;
    line-height: 10.500px;
    text-align: center;
}
.t1 td {
    padding: 0;
    border: 1px solid #111;
    white-space: nowrap;
}
.t1 tr td:first-child {
    border-left: 0;
}
.t1 tr td:last-child {
    border-right: 0;
}
.t1 sup {
    font-size: 6.500px;
    line-height: 0;
}
.r-soft td {
    border-bottom: 2px solid #666 !important;
}
.h11 td { height: 10px; }
.h12 td { height: 11px; }
.h13 td { height: 12px; }
.h34 td { height: 33px; }
.h35 td { height: 33.500px; }
.w43 { width: 43px; }
.w69 { width: 69px; }
.w76 { width: 76px; }
.w80 { width: 80px; }
.w78 { width: 78px; }
.w65 { width: 65px; }
.w57 { width: 57px; }
.cell {
    display: flex;
    align-items: center;
    justify-content: center;
    gap: 2px;
}
.blk {
    --l: #222;
    --r: #222;
    position: relative;
    display: inline-block;
    padding: 0 7.500px;
}
.blk > span {
    display: block;
}
.blk::before, .blk::after {
    content: "";
    position: absolute;
    top: 0;
    bottom: 0;
    width: 3px;
    border: solid var(--l);
    border-width: 1px 0 1px 1px;
}
.blk::before {
    left: 0;
}
.blk::after {
    right: 0;
    border-color: var(--r);
    border-width: 1px 1px 1px 0;
}
.l-cy { --l: #19b5c9; }
.l-bl { --l: #1c56a8; }
.l-re { --l: #a33a2a; }
.l-or { --l: #d9962e; }
.l-bk { --l: #222; }
.r-cy { --r: #19b5c9; }
.r-bl { --r: #1c56a8; }
.r-re { --r: #8c2a20; }
.r-or { --r: #d9762e; }
.r-bk { --r: #222; }
.cap {
    width: 660px;
    font-size: 11.600px;
    line-height: 14.700px;
}
.cap-t1 {
    margin-top: 5px;
}
.ln {
    text-align: justify;
    text-align-last: justify;
    white-space: normal;
}
.ln.end {
    text-align-last: left;
}
.ind {
    text-indent: 16px;
}
.ind2 {
    text-indent: 13px;
}
.plots {
    display: block;
    width: 680px;
    height: 192px;
    margin: -1.200px 0 0 -11px;
}
.dash {
    fill: none;
    stroke: #222;
    stroke-width: 1.200px;
    stroke-dasharray: 8 5;
    vector-effect: non-scaling-stroke;
}
.thin, .thick {
    fill: none;
    vector-effect: non-scaling-stroke;
}
.thin {
    stroke-width: .9px;
}
.thick {
    stroke-width: 2px;
}
.cy {
    stroke: #1fe8ee;
}
.re {
    stroke: #f4141c;
}
.axis {
    fill: none;
    stroke: #555;
    stroke-width: 1.200px;
}
.tk {
    font-size: 9px;
    font-weight: 700;
    fill: #222;
}
.ax-l {
    font-size: 8.500px;
    font-weight: 700;
    fill: #222;
}
.ta-e {
    text-anchor: end;
}
.ta-m {
    text-anchor: middle;
}
.cv-re {
    font-size: 10.500px;
    fill: #f4141c;
}
.cv-cy {
    font-size: 10.500px;
    fill: #1fe8ee;
}
.leg {
    fill: #fff;
    stroke: #111;
    stroke-width: 1.300px;
}
.lg {
    font-size: 10.500px;
    fill: #111;
}
.cap-f4 {
    margin-top: 2.200px;
}
.cols {
    display: flex;
    justify-content: space-between;
    width: 660px;
    margin-top: 22px;
}
.col-l {
    width: 314px;
}
.col-r {
    width: 316px;
    padding-top: 4px;
}
.t2 {
    table-layout: fixed;
    width: 200px;
    margin-left: 57px;
    border-collapse: collapse;
    border-top: 2px solid #222;
    border-bottom: 2px solid #222;
    font-size: 12px;
    text-align: center;
}
.t2 td {
    height: 16px;
    padding: 0;
    line-height: 16px;
    border-left: 1px solid #222;
}
.t2 td:first-child {
    border-left: 0;
}
.t2-head td {
    height: 15px;
    border-bottom: 1px solid #222;
}
.cap-t2 {
    width: 314px;
    margin-top: 4.500px;
    font-size: 11.600px;
    line-height: 15px;
}
.para {
    font-size: 12.800px;
    line-height: 15.820px;
}
.col-r .para {
    line-height: 15.900px;
}
.para sup {
    font-size: 8px;
    line-height: 0;
}
.para-a {
    margin-top: 35.400px;
}
.para-b {
    margin-top: 5px;
}
.para-res {
    margin-top: 9px;
}
.foot {
    position: relative;
    margin-top: 6px;
    padding-top: 4px;
    font-size: 10.400px;
    line-height: 12.500px;
    border-top: 0;
}
.foot::before {
    content: "";
    position: absolute;
    top: 0;
    left: 0;
    width: 126px;
    height: 1px;
    background: #222;
}
.foot sup {
    font-size: 7px;
    line-height: 0;
}
.pno {
    margin-top: 22px;
    width: 660px;
    font-size: 12.800px;
    line-height: 16px;
    text-align: center;
}
.save-pdf {
    position: absolute;
    right: 57px;
    bottom: 6px;
    width: 152px;
    height: 36px;
    box-sizing: border-box;
    border-radius: 18px;
    background: #f0f0f0;
    box-shadow: 0 1px 2px rgba(0, 0, 0, .45);
    color: #444;
    font-size: 14px;
    line-height: 36px;
    text-align: center;
    white-space: nowrap;
}

/* bottom bar */
.taskbar {
    display: flex;
    gap: 4px;
    height: 28px;
    margin-top: 2px;
    padding-left: 3px;
    border-bottom: 2px solid #fff;
}
.task {
    display: flex;
    align-items: center;
    flex: none;
    box-sizing: border-box;
    width: 261px;
    padding-left: 7px;
    border: 1px solid #2b2b2b;
    border-bottom: 0;
    border-radius: 4px 4px 0 0;
    background: #0a0a0a;
    color: #ccc;
    font-size: 14px;
    line-height: 30px;
    white-space: nowrap;
}
.task-on {
    color: #e8e8e8;
    font-size: 14.500px;
}
.task-tight {
    font-size: 13.800px;
}
.task-i {
    flex: none;
    width: 20px;
    height: 23px;
    margin-right: 6px;
}
.task-c {
    flex: none;
    width: 23px;
    height: 23px;
    margin: 0 5px 0 0;
}
.pager {
    flex: none;
    width: 55px;
    margin-left: auto;
    margin-right: 4px;
    border: 1px solid #555;
    box-sizing: border-box;
    background: #333;
    color: #ccc;
    font-size: 15px;
    line-height: 26px;
    text-align: center;
}
```
